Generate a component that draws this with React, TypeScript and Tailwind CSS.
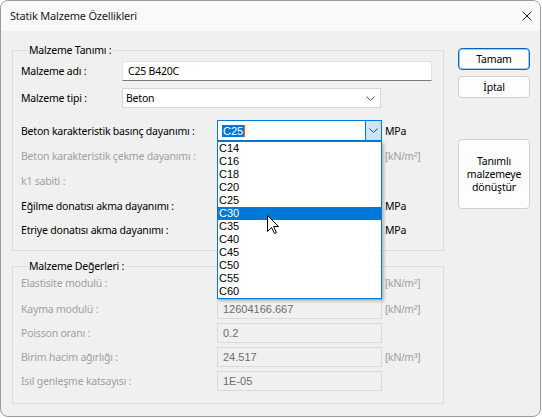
import React from "react";

const Chevron = ({ color = "#606060" }: { color?: string }) => (
  <svg width="9" height="5" viewBox="0 0 9 5">
    <path d="M0.5 0.5 L4.5 4.5 L8.5 0.5" stroke={color} strokeWidth="1" fill="none" />
  </svg>
);

const grades = ["C14", "C16", "C18", "C20", "C25", "C30", "C35", "C40", "C45", "C50", "C55", "C60"];

function DisabledField({ value }: { value?: string }) {
  return (
    <div className="w-[165px] h-[20px] shrink-0 border border-[#d9d9d9] bg-[#f0f0f0] flex items-center pl-[5px] font-['Liberation_Sans',Arial,sans-serif] text-[11px] tracking-normal text-[#6d6d6d]">
      {value}
    </div>
  );
}

function Unit({ text, gray }: { text: string; gray?: boolean }) {
  return gray ? (
    <span className="ml-[3px] whitespace-nowrap font-['Liberation_Sans',Arial,sans-serif] text-[11px] tracking-normal text-[#a0a0a0]">{text}</span>
  ) : (
    <span className="ml-[3px] whitespace-nowrap text-black">{text}</span>
  );
}

export default function App() {
  return (
    <div className="relative w-[542px] h-[419px] bg-white font-['Noto_Sans',sans-serif] text-[10.5px] tracking-[-0.2px] leading-[16px] text-black whitespace-nowrap">
      <div className="w-[541px] h-[417px] border border-[#9a9a9a] rounded-[8px] overflow-hidden flex flex-col bg-[#f0f0f0]">
        {/* title bar */}
        <div className="h-[30px] shrink-0 bg-[#f9f9f9] flex items-center justify-between pl-[9px] pr-[8px]">
          <span className="text-[#1a1a1a] text-[11px]">Statik Malzeme Özellikleri</span>
          <svg width="10" height="10" viewBox="0 0 10 10">
            <path d="M0.5 0.5 L9.5 9.5 M9.5 0.5 L0.5 9.5" stroke="#1a1a1a" strokeWidth="1" fill="none" />
          </svg>
        </div>

        {/* body */}
        <div className="flex pt-[12px]">
          <div className="ml-[11px] w-[432px] flex flex-col">
            {/* group 1 */}
            <fieldset className="border border-[#dcdcdc] pl-[8px] pb-[10px]">
              <legend className="ml-[6px] px-[2px] leading-[14px]">Malzeme Tanımı :</legend>
              <div className="flex flex-col">
                <div className="mt-[4px] h-[20px] flex items-center">
                  <span className="w-[101px] shrink-0">Malzeme adı :</span>
                  <div className="w-[310px] h-[20px] bg-white border border-[#e3e3e3] border-b-[#7a7a7a] flex items-center pl-[5px]">
                    C25 B420C
                  </div>
                </div>
                <div className="mt-[7px] h-[20px] flex items-center">
                  <span className="w-[101px] shrink-0">Malzeme tipi :</span>
                  <div className="w-[259px] h-[20px] bg-white border border-[#d6d6d6] flex items-center justify-between pl-[3px] pr-[5px]">
                    <span>Beton</span>
                    <Chevron />
                  </div>
                </div>
                <div className="mt-[12px] h-[21px] flex items-center">
                  <span className="w-[196px] shrink-0">Beton karakteristik basınç dayanımı :</span>
                  <div className="w-[165px] h-[21px] shrink-0 bg-white border border-[#0078d7] flex items-stretch">
                    <div className="flex-1 flex items-center pl-[4px]">
                      <span className="bg-[#0078d7] text-white font-['Liberation_Sans',Arial,sans-serif] text-[11px] tracking-normal leading-[12px] px-[1px]">C25</span>
                      <span className="w-[1px] h-[12px] bg-[#f7630c]" />
                    </div>
                    <div className="w-[16px] bg-[#cce4f7] border-l border-[#0078d7] flex items-center justify-center">
                      <Chevron color="#404040" />
                    </div>
                  </div>
                  <Unit text="MPa" />
                </div>
                <div className="mt-[5px] h-[20px] flex items-center">
                  <span className="w-[196px] shrink-0 text-[#a0a0a0]">Beton karakteristik çekme dayanımı :</span>
                  <DisabledField />
                  <Unit text="[kN/m²]" gray />
                </div>
                <div className="mt-[5px] h-[20px] flex items-center">
                  <span className="w-[196px] shrink-0 text-[#a0a0a0]">k1 sabiti :</span>
                  <DisabledField />
                </div>
                <div className="mt-[5px] h-[20px] flex items-center">
                  <span className="w-[196px] shrink-0">Eğilme donatısı akma dayanımı :</span>
                  <DisabledField />
                  <Unit text="MPa" />
                </div>
                <div className="mt-[4px] h-[20px] flex items-center">
                  <span className="w-[196px] shrink-0">Etriye donatısı akma dayanımı :</span>
                  <DisabledField />
                  <Unit text="MPa" />
                </div>
              </div>
            </fieldset>

            {/* group 2 */}
            <fieldset className="mt-[8px] border border-[#dcdcdc] pl-[8px] pb-[12px]">
              <legend className="ml-[6px] px-[2px] leading-[14px]">Malzeme Değerleri :</legend>
              <div className="flex flex-col text-[#a0a0a0]">
                <div className="h-[20px] flex items-center">
                  <span className="w-[196px] shrink-0">Elastisite modulü :</span>
                  <DisabledField />
                  <Unit text="[kN/m²]" gray />
                </div>
                <div className="mt-[6px] h-[20px] flex items-center">
                  <span className="w-[196px] shrink-0">Kayma modulü :</span>
                  <DisabledField value="12604166.667" />
                  <Unit text="[kN/m²]" gray />
                </div>
                <div className="mt-[4px] h-[20px] flex items-center">
                  <span className="w-[196px] shrink-0">Poisson oranı :</span>
                  <DisabledField value="0.2" />
                </div>
                <div className="mt-[4px] h-[20px] flex items-center">
                  <span className="w-[196px] shrink-0">Birim hacim ağırlığı :</span>
                  <DisabledField value="24.517" />
                  <Unit text="[kN/m³]" gray />
                </div>
                <div className="mt-[4px] h-[20px] flex items-center">
                  <span className="w-[196px] shrink-0">Isıl genleşme katsayısı :</span>
                  <DisabledField value="1E-05" />
                </div>
              </div>
            </fieldset>
          </div>

          {/* buttons */}
          <div className="ml-[14px] mt-[5px] w-[72px] flex flex-col">
            <button className="h-[22px] rounded-[4px] bg-[#fdfdfd] border border-[#0067c0] shadow-[inset_0_0_0_1px_rgba(0,103,192,0.35)] text-black">
              Tamam
            </button>
            <button className="mt-[6px] h-[22px] rounded-[4px] bg-[#fdfdfd] border border-[#d0d0d0] text-black">
              İptal
            </button>
            <button className="mt-[41px] h-[70px] rounded-[4px] bg-[#fdfdfd] border border-[#d0d0d0] text-black leading-[13px] flex flex-col items-center justify-center text-center">
              <span className="leading-[13px]">Tanımlı</span>
              <span className="leading-[13px]">malzemeye</span>
              <span className="leading-[13px]">dönüştür</span>
            </button>
          </div>
        </div>
      </div>

      {/* open dropdown list */}
      <div className="absolute left-[217px] top-[141px] w-[165px] h-[158px] bg-white border border-[#0078d7] shadow-[2px_2px_3px_rgba(0,0,0,0.25)] flex flex-col font-['Liberation_Sans',Arial,sans-serif] text-[11px] tracking-normal">
        {grades.map((g) => (
          <div
            key={g}
            className={
              g === "C30"
                ? "h-[13px] leading-[13px] pl-[1px] bg-[#0078d7] text-white"
                : "h-[13px] leading-[13px] pl-[1px] text-black"
            }
          >
            {g}
          </div>
        ))}
      </div>

      {/* mouse cursor */}
      <svg className="absolute left-[267px] top-[215px]" width="13" height="20" viewBox="0 0 13 20">
        <path d="M0.5 0.5 L0.5 16.5 L4.5 12.5 L7.5 18.5 L9.5 17.5 L6.5 11.5 L11.5 11.5 Z" fill="white" stroke="black" strokeWidth="1" strokeLinejoin="miter" />
      </svg>
    </div>
  );
}
